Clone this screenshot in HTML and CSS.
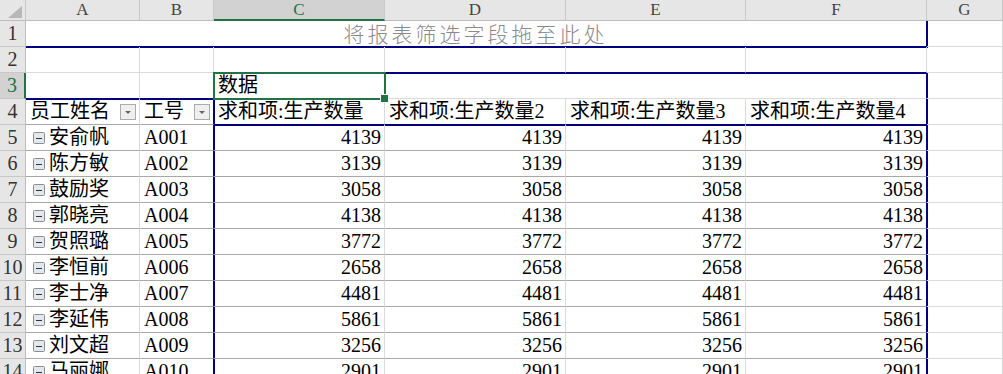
FILE: index.html
```html
<!DOCTYPE html>
<html lang="zh-CN">
<head>
    <meta charset="UTF-8">
    <title>数据透视表</title>
    <link rel="stylesheet" href="styles.css">
</head>
<body>

    <div class="sheet">
        <!-- column headers -->
        <div class="hd corner">
            <svg width="25" height="20" viewBox="0 0 25 20"><path d="M22 6V18H8Z" fill="#b7b7b7"/></svg>
        </div>
        <div class="hd">A</div>
        <div class="hd">B</div>
        <div class="hd sel">C</div>
        <div class="hd">D</div>
        <div class="hd">E</div>
        <div class="hd">F</div>
        <div class="hd">G</div>

        <!-- row 1: report filter drop zone -->
        <div class="rh">1</div>
        <div class="c title nbr">将报表筛选字段拖至此处</div>
        <div class="c"></div>

        <!-- row 2 -->
        <div class="rh">2</div>
        <div class="c"></div>
        <div class="c"></div>
        <div class="c"></div>
        <div class="c nb"></div>
        <div class="c nb"></div>
        <div class="c nb"></div>
        <div class="c"></div>

        <!-- row 3 -->
        <div class="rh sel">3</div>
        <div class="c nb"></div>
        <div class="c nb"></div>
        <div class="c active">数据</div>
        <div class="c span3 nr"></div>
        <div class="c"></div>

        <!-- row 4: field headers -->
        <div class="rh">4</div>
        <div class="c pv fld">员工姓名
            <svg class="drop" width="16" height="16" viewBox="0 0 16 16"><rect x="0.5" y="0.5" width="15" height="15" fill="#efefef" stroke="#ababab"/><path d="M5 7h6l-3 3z" fill="#666"/></svg>
        </div>
        <div class="c pv fld nr">工号
            <svg class="drop" width="16" height="16" viewBox="0 0 16 16"><rect x="0.5" y="0.5" width="15" height="15" fill="#efefef" stroke="#ababab"/><path d="M5 7h6l-3 3z" fill="#666"/></svg>
        </div>
        <div class="c nb">求和项:生产数量</div>
        <div class="c nb">求和项:生产数量2</div>
        <div class="c nb">求和项:生产数量3</div>
        <div class="c nbr">求和项:生产数量4</div>
        <div class="c"></div>

        <!-- data rows -->
        <div class="rh">5</div>
        <div class="c pv name"><svg width="12" height="12" viewBox="0 0 12 12"><rect x="0.5" y="0.5" width="11" height="11" rx="1" fill="#e3e8ef" stroke="#8c8c8c"/><path d="M3 6.5h6" stroke="#333"/></svg>安俞帆</div>
        <div class="c pv nr">A001</div>
        <div class="c pv num">4139</div>
        <div class="c pv num">4139</div>
        <div class="c pv num">4139</div>
        <div class="c pv num nr">4139</div>
        <div class="c"></div>

        <div class="rh">6</div>
        <div class="c pv name"><svg width="12" height="12" viewBox="0 0 12 12"><rect x="0.5" y="0.5" width="11" height="11" rx="1" fill="#e3e8ef" stroke="#8c8c8c"/><path d="M3 6.5h6" stroke="#333"/></svg>陈方敏</div>
        <div class="c pv nr">A002</div>
        <div class="c pv num">3139</div>
        <div class="c pv num">3139</div>
        <div class="c pv num">3139</div>
        <div class="c pv num nr">3139</div>
        <div class="c"></div>

        <div class="rh">7</div>
        <div class="c pv name"><svg width="12" height="12" viewBox="0 0 12 12"><rect x="0.5" y="0.5" width="11" height="11" rx="1" fill="#e3e8ef" stroke="#8c8c8c"/><path d="M3 6.5h6" stroke="#333"/></svg>鼓励奖</div>
        <div class="c pv nr">A003</div>
        <div class="c pv num">3058</div>
        <div class="c pv num">3058</div>
        <div class="c pv num">3058</div>
        <div class="c pv num nr">3058</div>
        <div class="c"></div>

        <div class="rh">8</div>
        <div class="c pv name"><svg width="12" height="12" viewBox="0 0 12 12"><rect x="0.5" y="0.5" width="11" height="11" rx="1" fill="#e3e8ef" stroke="#8c8c8c"/><path d="M3 6.5h6" stroke="#333"/></svg>郭晓亮</div>
        <div class="c pv nr">A004</div>
        <div class="c pv num">4138</div>
        <div class="c pv num">4138</div>
        <div class="c pv num">4138</div>
        <div class="c pv num nr">4138</div>
        <div class="c"></div>

        <div class="rh">9</div>
        <div class="c pv name"><svg width="12" height="12" viewBox="0 0 12 12"><rect x="0.5" y="0.5" width="11" height="11" rx="1" fill="#e3e8ef" stroke="#8c8c8c"/><path d="M3 6.5h6" stroke="#333"/></svg>贺照璐</div>
        <div class="c pv nr">A005</div>
        <div class="c pv num">3772</div>
        <div class="c pv num">3772</div>
        <div class="c pv num">3772</div>
        <div class="c pv num nr">3772</div>
        <div class="c"></div>

        <div class="rh">10</div>
        <div class="c pv name"><svg width="12" height="12" viewBox="0 0 12 12"><rect x="0.5" y="0.5" width="11" height="11" rx="1" fill="#e3e8ef" stroke="#8c8c8c"/><path d="M3 6.5h6" stroke="#333"/></svg>李恒前</div>
        <div class="c pv nr">A006</div>
        <div class="c pv num">2658</div>
        <div class="c pv num">2658</div>
        <div class="c pv num">2658</div>
        <div class="c pv num nr">2658</div>
        <div class="c"></div>

        <div class="rh">11</div>
        <div class="c pv name"><svg width="12" height="12" viewBox="0 0 12 12"><rect x="0.5" y="0.5" width="11" height="11" rx="1" fill="#e3e8ef" stroke="#8c8c8c"/><path d="M3 6.5h6" stroke="#333"/></svg>李士净</div>
        <div class="c pv nr">A007</div>
        <div class="c pv num">4481</div>
        <div class="c pv num">4481</div>
        <div class="c pv num">4481</div>
        <div class="c pv num nr">4481</div>
        <div class="c"></div>

        <div class="rh">12</div>
        <div class="c pv name"><svg width="12" height="12" viewBox="0 0 12 12"><rect x="0.5" y="0.5" width="11" height="11" rx="1" fill="#e3e8ef" stroke="#8c8c8c"/><path d="M3 6.5h6" stroke="#333"/></svg>李延伟</div>
        <div class="c pv nr">A008</div>
        <div class="c pv num">5861</div>
        <div class="c pv num">5861</div>
        <div class="c pv num">5861</div>
        <div class="c pv num nr">5861</div>
        <div class="c"></div>

        <div class="rh">13</div>
        <div class="c pv name"><svg width="12" height="12" viewBox="0 0 12 12"><rect x="0.5" y="0.5" width="11" height="11" rx="1" fill="#e3e8ef" stroke="#8c8c8c"/><path d="M3 6.5h6" stroke="#333"/></svg>刘文超</div>
        <div class="c pv nr">A009</div>
        <div class="c pv num">3256</div>
        <div class="c pv num">3256</div>
        <div class="c pv num">3256</div>
        <div class="c pv num nr">3256</div>
        <div class="c"></div>

        <div class="rh">14</div>
        <div class="c pv name"><svg width="12" height="12" viewBox="0 0 12 12"><rect x="0.5" y="0.5" width="11" height="11" rx="1" fill="#e3e8ef" stroke="#8c8c8c"/><path d="M3 6.5h6" stroke="#333"/></svg>马丽娜</div>
        <div class="c pv nr">A010</div>
        <div class="c pv num">2901</div>
        <div class="c pv num">2901</div>
        <div class="c pv num">2901</div>
        <div class="c pv num nr">2901</div>
        <div class="c"></div>
    </div>

</body>
</html>
```

FILE: styles.css
```css
* {
    box-sizing: border-box;
}

body {
    margin: 0;
    background-color: #fff;
}

/* Worksheet grid */
.sheet {
    display: grid;
    grid-template-columns: 26px 114px 74px 171px 181px 180px 181px 76px;
    grid-template-rows: 21px repeat(14, 26px);
    width: 1003px;
    height: 374px;
    overflow: hidden;
    font-family: "Liberation Serif", "Noto Sans CJK SC", serif;
    font-size: 20px;
    color: #000;
}

/* Column headers */
.hd {
    background-color: #e6e6e6;
    border-right: 1px solid #c8c8c8;
    border-bottom: 1px solid #bdbdbd;
    text-align: center;
    font-size: 17px;
    line-height: 20px;
    color: #444;
}

.hd.sel {
    background-color: #d2d2d2;
    color: #217346;
    border-bottom: 2px solid #217346;
}

.corner {
    display: flex;
}

/* Row headers */
.rh {
    background-color: #e6e6e6;
    border-right: 1px solid #bdbdbd;
    border-bottom: 1px solid #c8c8c8;
    text-align: center;
    line-height: 25px;
    color: #333;
    white-space: nowrap;
}

.rh.sel {
    background-color: #d2d2d2;
    color: #217346;
    border-right: 2px solid #217346;
}

/* Cells */
.c {
    border-right: 1px solid #dadada;
    border-bottom: 1px solid #dadada;
    padding: 0 4px;
    line-height: 25px;
    white-space: nowrap;
}

.pv {
    border-bottom-color: #a8a8a8;
}

.num {
    text-align: right;
    padding-right: 3px;
}

/* Pivot table outline */
.nb {
    border-bottom-color: #000080;
    box-shadow: 0 1px 0 #000080;
}

.nr {
    border-right-color: #000080;
    box-shadow: 1px 0 0 #000080;
}

.nbr {
    border-bottom-color: #000080;
    border-right-color: #000080;
    box-shadow: 1px 0 0 #000080, 0 1px 0 #000080, 1px 1px 0 #000080;
}

.span3 {
    grid-column: span 3;
}

.title {
    grid-column: span 6;
    text-align: center;
    padding-left: 3px;
    font-family: "Noto Sans CJK SC", sans-serif;
    font-weight: 300;
    font-size: 21px;
    letter-spacing: 3px;
    color: #8a8a8a;
}

/* Field header with dropdown */
.fld {
    display: flex;
    align-items: center;
    justify-content: space-between;
    padding-right: 3px;
}

.name {
    display: flex;
    align-items: center;
    gap: 4px;
    padding-left: 7px;
}

/* Active cell */
.active {
    position: relative;
    z-index: 1;
}

.active::before {
    content: "";
    position: absolute;
    top: -1px;
    left: -1px;
    right: -2px;
    bottom: -2px;
    border: 2px solid #217346;
}

.active::after {
    content: "";
    position: absolute;
    right: -5px;
    bottom: -5px;
    width: 7px;
    height: 7px;
    background-color: #217346;
    border: 1px solid #fff;
}
```
